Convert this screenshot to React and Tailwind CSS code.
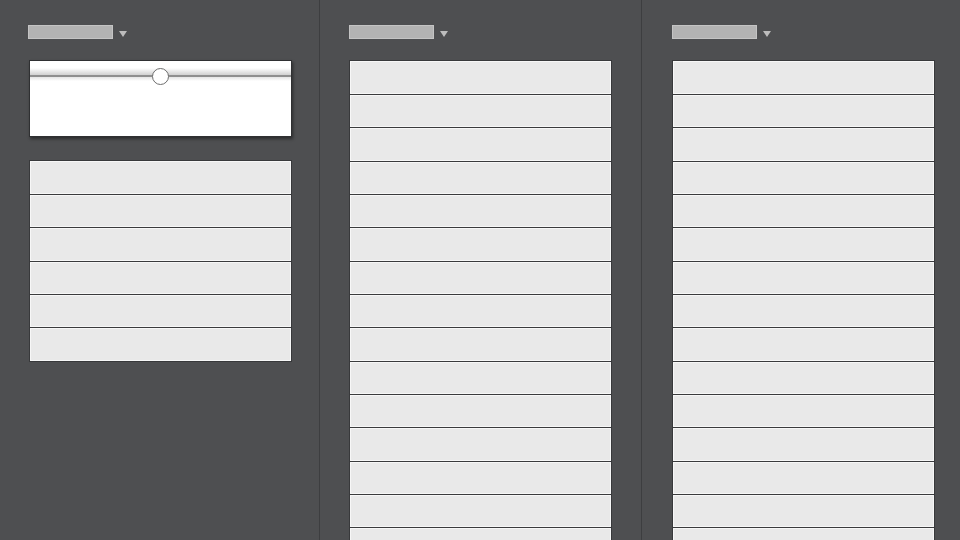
const ROWS_LEFT = 6;
const ROWS_LONG = 15;

function Header() {
  return (
    <div className="flex items-start h-[14px]">
      <div className="w-[85px] h-[14px] bg-[#b3b3b3] border border-[#c4c4c4]" />
      <svg className="ml-[6px] mt-[6px]" width="8" height="6" viewBox="0 0 8 6">
        <path d="M0 0 L8 0 L4 6 Z" fill="#bdbdbd" />
      </svg>
    </div>
  );
}

function RowList({ count }) {
  return (
    <div className="w-[263px] border border-[#38393b] bg-[#38393b] flex flex-col shrink-0">
      {Array.from({ length: count }).map((_, i) => (
        <div
          key={i}
          className={`${i % 3 === 2 ? 'h-[34px]' : 'h-[33px]'} ${i === 0 ? '' : 'border-t border-[#3a3b3d]'} bg-[#e9e9e9] shadow-[inset_0_0_0_1px_#f7f7f7] shrink-0`}
        />
      ))}
    </div>
  );
}

function SliderCard() {
  return (
    <div className="relative w-[263px] h-[77px] bg-white border border-[#2f3032] shadow-[1px_2px_3px_rgba(0,0,0,0.45)]">
      {/* track glow */}
      <div className="absolute left-0 right-0 top-[7px] h-[13px] bg-gradient-to-b from-white via-[#d4d4d4] to-white" />
      <div className="absolute left-0 right-0 top-[14px] h-[2px] bg-[#8f8f8f]" />
      {/* thumb */}
      <div className="absolute left-[122px] top-[7px] w-[17px] h-[17px] rounded-full bg-white border border-[#6e6e6e]" />
    </div>
  );
}

export default function App() {
  return (
    <div className="w-[960px] h-[540px] bg-[#4e4f51] flex overflow-hidden">
      <div className="w-[319px] h-full pl-[28px] pt-[25px] flex flex-col">
        <Header />
        <div className="ml-px mt-[21px]">
          <SliderCard />
        </div>
        <div className="ml-px mt-[23px]">
          <RowList count={ROWS_LEFT} />
        </div>
      </div>
      <div className="w-px h-full bg-[#3d3e40] shrink-0" />
      <div className="w-[321px] h-full pl-[29px] pt-[25px] flex flex-col overflow-hidden">
        <Header />
        <div className="mt-[21px]">
          <RowList count={ROWS_LONG} />
        </div>
      </div>
      <div className="w-px h-full bg-[#3d3e40] shrink-0" />
      <div className="flex-1 h-full pl-[30px] pt-[25px] flex flex-col overflow-hidden">
        <Header />
        <div className="mt-[21px]">
          <RowList count={ROWS_LONG} />
        </div>
      </div>
    </div>
  );
}
